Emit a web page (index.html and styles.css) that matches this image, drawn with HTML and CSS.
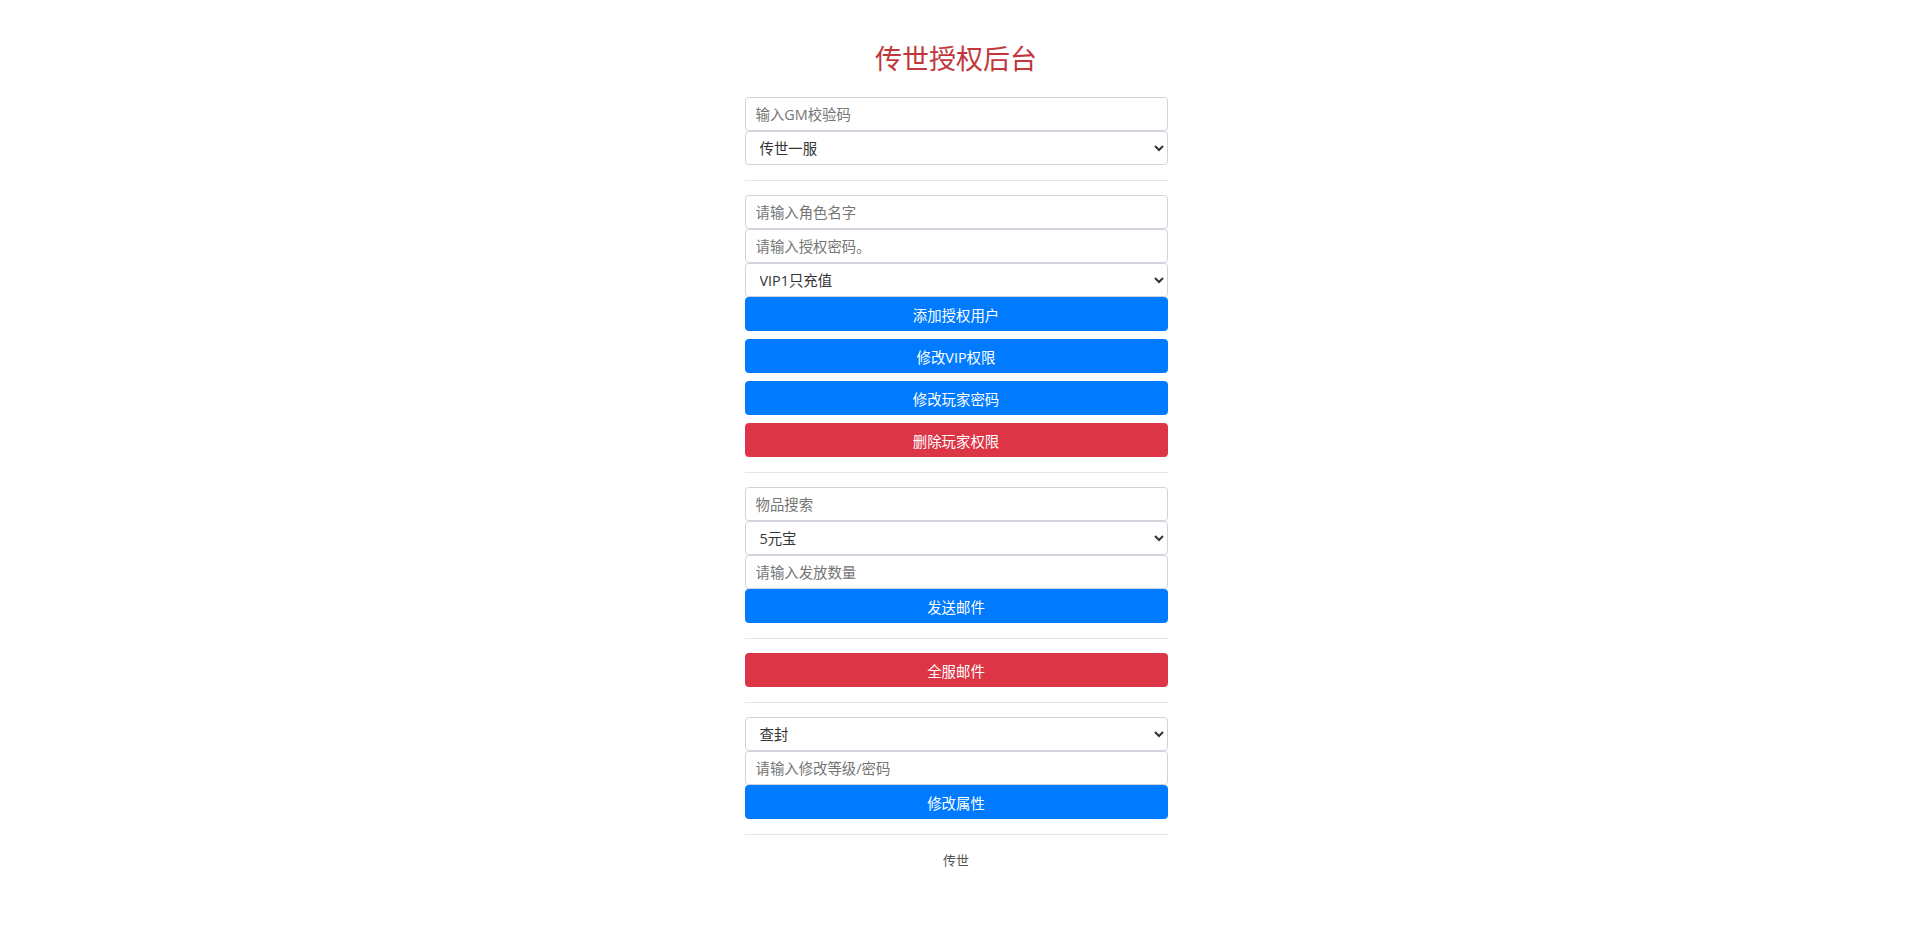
FILE: index.html
```html
<!DOCTYPE html>
<html lang="zh-CN">
<head>
<meta charset="utf-8">
<title>传世授权后台</title>
<link rel="stylesheet" href="styles.css">
</head>
<body>
<div class="wrap">
  <h1 class="title">传世授权后台</h1>

  <div class="group">
    <input class="field" type="text" placeholder="输入GM校验码">
    <select class="field select">
      <option>传世一服</option>
    </select>
  </div>

  <hr class="sep">

  <div class="group">
    <input class="field" type="text" placeholder="请输入角色名字">
    <input class="field" type="text" placeholder="请输入授权密码。">
    <select class="field select">
      <option>VIP1只充值</option>
    </select>
    <button class="btn blue">添加授权用户</button>
    <button class="btn blue">修改VIP权限</button>
    <button class="btn blue">修改玩家密码</button>
    <button class="btn red">删除玩家权限</button>
  </div>

  <hr class="sep">

  <div class="group">
    <input class="field" type="text" placeholder="物品搜索">
    <select class="field select">
      <option>5元宝</option>
    </select>
    <input class="field" type="text" placeholder="请输入发放数量">
    <button class="btn blue">发送邮件</button>
  </div>

  <hr class="sep">

  <div class="group">
    <button class="btn red">全服邮件</button>
  </div>

  <hr class="sep">

  <div class="group">
    <select class="field select">
      <option>查封</option>
    </select>
    <input class="field" type="text" placeholder="请输入修改等级/密码">
    <button class="btn blue">修改属性</button>
  </div>

  <hr class="sep">

  <p class="footer">传世</p>
</div>
</body>
</html>
```

FILE: styles.css
```css
html, body {
  margin: 0;
  padding: 0;
  background: #ffffff;
}

body {
  font-family: "Open Sans", "Noto Sans CJK SC", sans-serif;
  font-size: 14.4px;
  color: #212529;
}

.wrap {
  width: 423px;
  margin: 0 auto;
  padding-top: 42px;
}

.title {
  margin: 0 0 21px;
  font-size: 27px;
  line-height: 34px;
  font-weight: 400;
  text-align: center;
  color: #c1373c;
}

.group {
  display: flex;
  flex-direction: column;
}

.field {
  display: block;
  box-sizing: border-box;
  width: 100%;
  height: 34px;
  margin: 0;
  padding: 0 10px;
  font-family: inherit;
  font-size: 14.4px;
  color: #495057;
  background: #fff;
  border: 1px solid #ced4da;
  border-radius: 3.6px;
  outline: none;
}

.field::placeholder {
  color: #757575;
  opacity: 1;
}

.select {
  padding-left: 10px;
  color: #333;
}

.btn {
  display: block;
  box-sizing: border-box;
  width: 100%;
  height: 34px;
  margin: 0;
  padding: 0 10px;
  border: 1px solid transparent;
  border-radius: 3.6px;
  font-family: inherit;
  font-size: 14.4px;
  font-weight: 400;
  color: #fff;
  text-align: center;
  cursor: pointer;
}

.btn + .btn {
  margin-top: 8px;
}

.blue {
  background: #007bff;
  border-color: #007bff;
}

.red {
  background: #dc3545;
  border-color: #dc3545;
}

.sep {
  margin: 14.5px 0;
  border: 0;
  border-top: 1px solid rgba(0, 0, 0, 0.1);
  height: 0;
}

.footer {
  margin: 13px 0 0;
  text-align: center;
  font-size: 13px;
  line-height: 22px;
  color: #555;
}
```
